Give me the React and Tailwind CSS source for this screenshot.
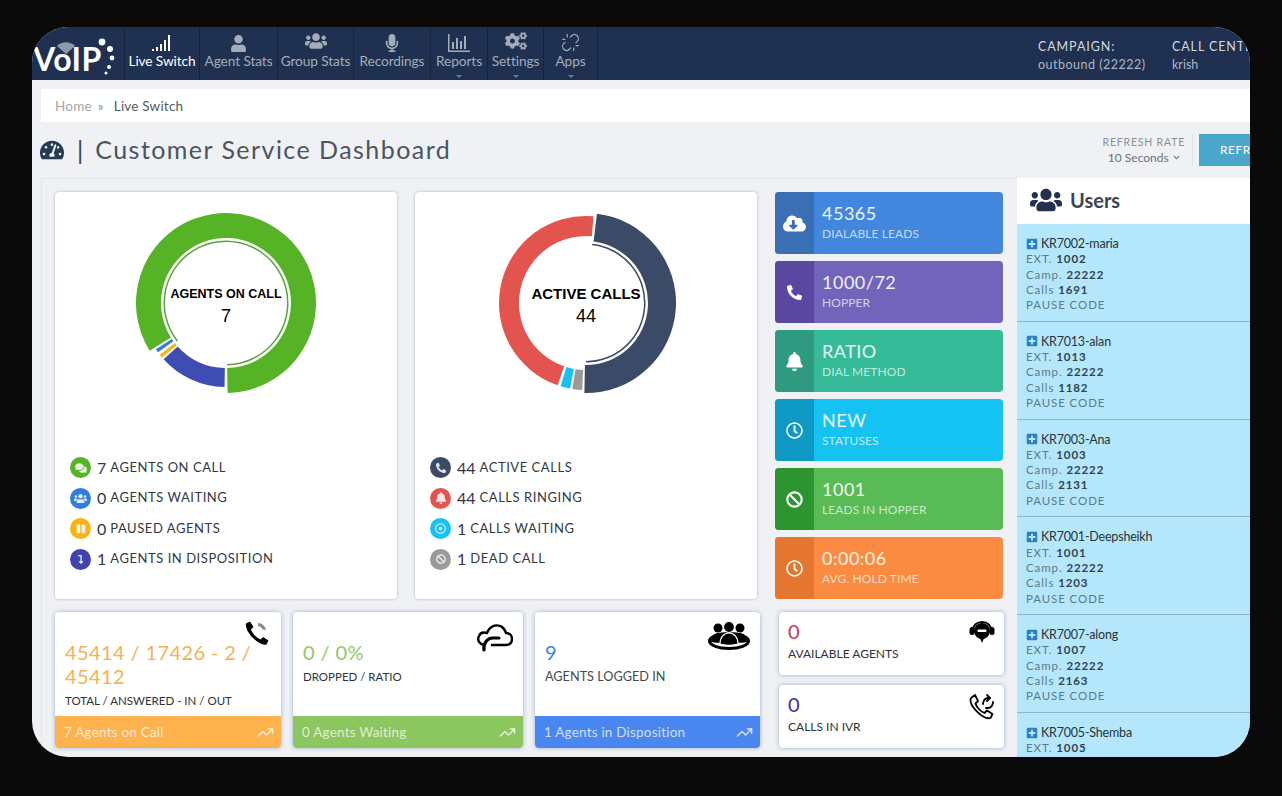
import React from 'react';
import {
  FaBan, FaBell, FaChevronDown, FaCloudDownloadAlt, FaCogs, FaComments, FaMicrophone, FaPause, FaPhone,
  FaPlusSquare, FaRegClock, FaRegDotCircle, FaTachometerAlt, FaUser, FaUsers, FaLevelDownAlt,
} from 'react-icons/fa';
import { TrendingUp, Unlink } from 'lucide-react';

const polar = (cx, cy, r, a) => {
  const t = ((a - 90) * Math.PI) / 180;
  return [cx + r * Math.cos(t), cy + r * Math.sin(t)];
};

// ring segment, angles in degrees clockwise from 12 o'clock
const arc = (cx, cy, r0, r1, a0, a1) => {
  const large = a1 - a0 > 180 ? 1 : 0;
  const [x1, y1] = polar(cx, cy, r1, a0);
  const [x2, y2] = polar(cx, cy, r1, a1);
  const [x3, y3] = polar(cx, cy, r0, a1);
  const [x4, y4] = polar(cx, cy, r0, a0);
  return `M${x1} ${y1}A${r1} ${r1} 0 ${large} 1 ${x2} ${y2}L${x3} ${y3}A${r0} ${r0} 0 ${large} 0 ${x4} ${y4}Z`;
};

const SignalIcon = () => (
  <svg width="22" height="18" viewBox="0 0 22 18" fill="currentColor">
    <rect x="1" y="15" width="2" height="2" />
    <rect x="5" y="13" width="2" height="4" />
    <rect x="9" y="10" width="2" height="7" />
    <rect x="13" y="6" width="2" height="11" />
    <rect x="17" y="1" width="2" height="16" />
  </svg>
);

const BarsIcon = () => (
  <svg width="22" height="18" viewBox="0 0 22 18" fill="currentColor">
    <rect x="0" y="0" width="1.5" height="18" />
    <rect x="0" y="16.5" width="22" height="1.5" />
    <rect x="4" y="8" width="2" height="7" />
    <rect x="8" y="4" width="2" height="11" />
    <rect x="12" y="7" width="2" height="8" />
    <rect x="16" y="2" width="2" height="13" />
  </svg>
);

const NAV = [
  { label: 'Live Switch', icon: <SignalIcon />, width: 'w-[75px]', active: true },
  { label: 'Agent Stats', icon: <FaUser size={17} />, width: 'w-[78px]' },
  { label: 'Group Stats', icon: <FaUsers size={22} />, width: 'w-[76px]' },
  { label: 'Recordings', icon: <FaMicrophone size={18} />, width: 'w-[77px]' },
  { label: 'Reports', icon: <BarsIcon />, width: 'w-[57px]', caret: true },
  { label: 'Settings', icon: <FaCogs size={22} />, width: 'w-[56px]', caret: true },
  { label: 'Apps', icon: <Unlink size={19} strokeWidth={1.5} />, width: 'w-[54px]', caret: true },
];

const TILES = [
  { value: '45365', label: 'DIALABLE LEADS', icon: <FaCloudDownloadAlt size={23} />, bg: 'bg-[#4287dd]', dark: 'bg-[#3a6fb5]' },
  { value: '1000/72', label: 'HOPPER', icon: <FaPhone size={15} className="-scale-x-100" />, bg: 'bg-[#7264bb]', dark: 'bg-[#5a479f]' },
  { value: 'RATIO', label: 'DIAL METHOD', icon: <FaBell size={19} />, bg: 'bg-[#35bb97]', dark: 'bg-[#2f9a7f]' },
  { value: 'NEW', label: 'STATUSES', icon: <FaRegClock size={17} />, bg: 'bg-[#15c3f3]', dark: 'bg-[#0e98c4]' },
  { value: '1001', label: 'LEADS IN HOPPER', icon: <FaBan size={17} />, bg: 'bg-[#58bb56]', dark: 'bg-[#2d9530]' },
  { value: '0:00:06', label: 'AVG. HOLD TIME', icon: <FaRegClock size={17} />, bg: 'bg-[#fb8b40]', dark: 'bg-[#e5762f]' },
];

const USERS = [
  { name: 'KR7002-maria', ext: '1002', calls: '1691' },
  { name: 'KR7013-alan', ext: '1013', calls: '1182' },
  { name: 'KR7003-Ana', ext: '1003', calls: '2131' },
  { name: 'KR7001-Deepsheikh', ext: '1001', calls: '1203' },
  { name: 'KR7007-along', ext: '1007', calls: '2163' },
  { name: 'KR7005-Shemba', ext: '1005', calls: '1120' },
];

const AGENT_LEGEND = [
  { n: '7', label: 'AGENTS ON CALL', color: 'bg-[#55b325]', icon: <FaComments size={12} /> },
  { n: '0', label: 'AGENTS WAITING', color: 'bg-[#2f7de1]', icon: <FaUsers size={13} /> },
  { n: '0', label: 'PAUSED AGENTS', color: 'bg-[#f5b316]', icon: <FaPause size={10} /> },
  { n: '1', label: 'AGENTS IN DISPOSITION', color: 'bg-[#3f45ad]', icon: <FaLevelDownAlt size={9} /> },
];

const CALL_LEGEND = [
  { n: '44', label: 'ACTIVE CALLS', color: 'bg-[#3b4a66]', icon: <FaPhone size={10} className="-scale-x-100" /> },
  { n: '44', label: 'CALLS RINGING', color: 'bg-[#e4544f]', icon: <FaBell size={12} /> },
  { n: '1', label: 'CALLS WAITING', color: 'bg-[#18c1f0]', icon: <FaRegDotCircle size={11} /> },
  { n: '1', label: 'DEAD CALL', color: 'bg-[#9a9a9a]', icon: <FaBan size={10} /> },
];

const Logo = () => (
  <div className="relative w-[92px] h-full shrink-0 text-white">
    <svg className="absolute left-0 top-0" width="92" height="53" viewBox="0 0 92 53">
      <path d="M25 19C30 14 38 14 43 19L34 27Z" fill="#8f9aa8" />
      <g fill="#fff">
        <circle cx="70" cy="15" r="3.4" />
        <circle cx="78" cy="22" r="3" />
        <circle cx="80" cy="31" r="2.4" />
        <circle cx="77" cy="40" r="2" />
        <circle cx="74" cy="46" r="1.5" />
      </g>
    </svg>
    <span className="absolute left-[1px] top-[12px] text-[32px] leading-[40px] font-bold tracking-[0.5px]">VoIP</span>
  </div>
);

const TopBar = () => (
  <header className="h-[53px] shrink-0 bg-[#1f3050] flex overflow-hidden">
    <Logo />
    {NAV.map((item) => (
      <div
        key={item.label}
        className={`${item.width} relative shrink-0 flex flex-col items-center border-l border-[#15233b] pt-[5px] ${item.active ? 'text-white' : 'text-[#a3acb9]'}`}
      >
        <div className="h-[20px] flex items-end">{item.icon}</div>
        <span className="text-[13.700px] leading-[18px] whitespace-nowrap tracking-[-0.1px]">{item.label}</span>
        {item.caret && <span className="absolute bottom-[2px] w-0 h-0 border-x-[3px] border-x-transparent border-t-[3px] border-t-[#6f7b8d]" />}
      </div>
    ))}
    <div className="border-l border-[#15233b] flex-1 flex justify-start pl-[440px] pt-[11px] text-[#d5d9df] whitespace-nowrap">
      <div className="w-[134px]">
        <div className="text-[12.5px] leading-[17px] tracking-[0.9px]">CAMPAIGN:</div>
        <div className="text-[12.5px] leading-[19px] tracking-[0.5px] text-[#aeb5c0]">outbound (22222)</div>
      </div>
      <div>
        <div className="text-[12.5px] leading-[17px] tracking-[0.9px]">CALL CENTER:</div>
        <div className="text-[12.5px] leading-[19px] text-[#aeb5c0]">krish</div>
      </div>
    </div>
  </header>
);

const TitleRow = () => (
  <div className="h-[56px] shrink-0 flex items-center pl-[8px] overflow-hidden">
    <FaTachometerAlt size={24} className="text-[#263a54] shrink-0" />
    <span className="ml-[13px] text-[25px] leading-[30px] text-[#3a3f48] font-normal">|</span>
    <h1 className="ml-[12px] text-[25px] leading-[30px] -mt-[2px] font-normal tracking-[1.45px] text-[#4a5560] whitespace-nowrap">Customer Service Dashboard</h1>
    <div className="ml-auto flex items-center h-[32px] -mt-[1px]">
      <div className="text-center border-r border-[#e0e2e6] pr-[7px] h-full pt-[1px]">
        <div className="text-[10.5px] leading-[15px] tracking-[0.8px] text-[#8b9097]">REFRESH RATE</div>
        <div className="text-[12px] leading-[16px] text-[#6b7178] flex items-center justify-center gap-[4px]">
          10 Seconds <FaChevronDown size={7} />
        </div>
      </div>
      <div className="ml-[6px] w-[51px] h-full bg-[#4ba6cc] text-white text-[12px] tracking-[0.5px] pl-[21px] flex items-center overflow-hidden whitespace-nowrap">REFRESH</div>
    </div>
  </div>
);

const DonutCard = ({ title, value, legend, children, titleSize }) => (
  <div className="w-[342px] h-[407px] bg-white rounded-[4px] shadow-[0_0_3px_rgba(90,100,120,0.45)] flex flex-col items-center">
    <div className="relative mt-[18px] w-[200px] h-[200px]">
      <svg width="200" height="200" viewBox="0 0 200 200">{children}</svg>
      <div className="absolute inset-0 flex flex-col items-center justify-center text-black font-['Liberation_Sans',sans-serif] pb-[8px]">
        <div className={`${titleSize} leading-[20px] font-bold whitespace-nowrap`}>{title}</div>
        <div className="text-[18px] leading-[24px]">{value}</div>
      </div>
    </div>
    <div className="self-start mt-[47px] ml-[15px] flex flex-col gap-[9.5px]">
      {legend.map((row) => (
        <div key={row.label} className="h-[21px] flex items-center text-[#33383f]">
          <span className={`${row.color} w-[21px] h-[21px] rounded-full flex items-center justify-center text-white/85`}>{row.icon}</span>
          <span className="ml-[6px] text-[16px]">{row.n}</span>
          <span className="ml-[4px] text-[13px] tracking-[0.55px] whitespace-nowrap">{row.label}</span>
        </div>
      ))}
    </div>
  </div>
);

const Tile = ({ value, label, icon, bg, dark }) => (
  <div className={`${bg} h-[62px] rounded-[4px] flex overflow-hidden text-white`}>
    <div className={`${dark} w-[39px] shrink-0 flex items-center justify-center`}>{icon}</div>
    <div className="pl-[8px] pt-[9px]">
      <div className="text-[18px] leading-[24px] tracking-[0.5px] text-white/90">{value}</div>
      <div className="text-[12px] leading-[18px] text-white/70 tracking-[0.1px]">{label}</div>
    </div>
  </div>
);

const PhoneSignal = () => (
  <svg width="28" height="28" viewBox="0 0 28 28">
    <path d="M3 3.500 7 1.500 10.500 7 8 9.500C9 13 13.500 18 17.500 19.500L20 17l5.500 3.500-2 4C16 27 1 11 3 3.500Z" fill="#000" />
    <path d="M15 3c4 0 7 3 8 7l-3.500-.5c-.5-2-2-3-4.500-3.500Z" fill="#8a8a8a" />
  </svg>
);

const CloudArrow = () => (
  <svg width="38" height="32" viewBox="0 0 38 32" fill="none" stroke="#000" strokeWidth="2.4" strokeLinecap="round" strokeLinejoin="round">
    <path d="M9 25C4 24 2 20 4 16c1-3 4-4 8-3 2-6 8-9 13-7 3 1 5 4 6 7 4 0 6 3 6 6 0 4-3 6-7 6H17" />
    <path d="M9 30c-1-6 3-12 9-12h6" strokeWidth="3.200" />
  </svg>
);

const GroupRing = () => (
  <svg width="42" height="30" viewBox="0 0 42 30">
    <ellipse cx="21" cy="21" rx="19.500" ry="7.500" fill="none" stroke="#000" strokeWidth="3" />
    <g fill="#000">
      <circle cx="10" cy="8" r="4.500" />
      <path d="M3 22c0-5 3-9 7-9s7 4 7 9c-4 1-10 1-14 0Z" />
      <circle cx="32" cy="8" r="4.500" />
      <path d="M25 22c0-5 3-9 7-9s7 4 7 9c-4 1-10 1-14 0Z" />
    </g>
    <g fill="#000" stroke="#fff" strokeWidth="1.200">
      <circle cx="21" cy="7" r="5.500" />
      <path d="M12 24c0-7 4-11 9-11s9 4 9 11c-5 1.500-13 1.500-18 0Z" />
    </g>
  </svg>
);

const Headset = () => (
  <svg width="26" height="24" viewBox="0 0 26 24">
    <path d="M4 11C4 5 8 2 13 2s9 3 9 9" fill="none" stroke="#000" strokeWidth="2" />
    <rect x="0.500" y="7" width="5" height="8" rx="2.500" fill="#000" />
    <rect x="20.500" y="7" width="5" height="8" rx="2.500" fill="#000" />
    <circle cx="13" cy="11" r="8" fill="#000" />
    <rect x="8.500" y="9.500" width="9" height="2.400" rx="1" fill="#fff" />
    <path d="M11 18l2 5 2-5Z" fill="#000" />
  </svg>
);

const PhoneLoop = () => (
  <svg width="26" height="28" viewBox="0 0 26 28" fill="none" stroke="#000" strokeWidth="1.800" strokeLinecap="round" strokeLinejoin="round">
    <path d="M2 5 6 2l3 6-2.500 2.500c1 3.500 5 8 9 9.500l2.500-2.500 5.500 3.500-2 4C14 27-1 12 2 5Z" />
    <path d="M14 11c0-3 2-6 5-6h2" />
    <path d="M18 2l3 3-3 3" />
    <path d="M24 9c0 3-2 6-5 6h-2" />
  </svg>
);

const StatCard = ({ width, value, valueColor, label, icon, footer, footerBg, labelClass }) => (
  <div className={`${width} h-[136px] bg-white rounded-[4px] shadow-[0_0_4px_rgba(96,130,190,0.6)] relative flex flex-col overflow-hidden`}>
    <div className="absolute right-[10px] top-[8px]">{icon}</div>
    <div className="flex-1 pl-[10px] pr-[4px] pt-[28px]">
      <div className={`text-[20px] leading-[24px] tracking-[0.4px] ${valueColor}`}>{value}</div>
      <div className={`leading-[15px] mt-[5px] whitespace-nowrap ${labelClass}`}>{label}</div>
    </div>
    <div className={`${footerBg} h-[32px] shrink-0 flex items-center justify-between pl-[9px] pr-[7px] text-white/75 text-[13.5px] tracking-[0.2px]`}>
      {footer}
      <TrendingUp size={17} strokeWidth={2.2} />
    </div>
  </div>
);

const SmallCard = ({ value, valueColor, label, icon }) => (
  <div className="h-[63px] bg-white rounded-[4px] shadow-[0_0_4px_rgba(96,130,190,0.6)] relative pl-[9px] pt-[8px]">
    <div className="absolute right-[9px] top-[8px]">{icon}</div>
    <div className={`text-[20px] leading-[22px] ${valueColor}`}>{value}</div>
    <div className="text-[12px] leading-[15px] mt-[4px] text-[#2e3338] whitespace-nowrap">{label}</div>
  </div>
);

const UserRow = ({ name, ext, calls }) => (
  <div className="h-[97.800px] shrink-0 border-b border-[#8fb6c8] bg-[#b5e7fc] pl-[9px] pt-[12px] text-[11.5px] leading-[15.300px] tracking-[0.9px] text-[#5c7b89]">
    <div className="flex items-center gap-[3px] text-[12.500px] text-[#28343c] tracking-[-0.2px]">
      <FaPlusSquare size={12} className="text-[#2b7fc0]" />
      {name}
    </div>
    <div>EXT. <span className="font-bold text-[#2f444f]">{ext}</span></div>
    <div>Camp. <span className="font-bold text-[#2f444f]">22222</span></div>
    <div>Calls <span className="font-bold text-[#2f444f]">{calls}</span></div>
    <div>PAUSE CODE</div>
  </div>
);

export default function App() {
  return (
    <div className="w-[1282px] h-[796px] bg-[#0a0a0a] pl-[32px] pt-[27px] overflow-hidden font-['Lato',sans-serif]">
      <div className="w-[1218px] h-[730px] rounded-[36px] overflow-hidden bg-[#eff1f4] flex flex-col">
        <TopBar />
        <div className="pt-[9px] pl-[9px] shrink-0">
          <div className="h-[33px] bg-white flex items-center pl-[14px] pt-[1px] text-[13.500px] tracking-[0.2px]">
            <span className="text-[#a2a6ab]">Home</span>
            <span className="ml-[6px] mr-[10px] text-[#8e9298]">»</span>
            <span className="text-[#555b62]">Live Switch</span>
          </div>
        </div>
        <TitleRow />
        <div className="flex flex-1 min-h-0">
          <div className="w-[985px] shrink-0 pl-[9px]">
            <div className="h-full border-t border-l border-[#e3e5e9] pl-[13px] pt-[13px]">
              <div className="flex gap-[18px]">
                <DonutCard title="AGENTS ON CALL" titleSize="text-[12.500px]" value="7" legend={AGENT_LEGEND}>
                  <path d={arc(100, 93, 65, 90, 238, 539)} fill="#55b325" />
                  <path d={arc(100, 93, 65, 84, 181, 228)} fill="#3f4db3" />
                  <path d={arc(100, 93, 65, 84, 229.500, 232)} fill="#f5b316" />
                  <path d={arc(100, 93, 65, 84, 234, 236.500)} fill="#2f7de1" />
                  <path d={arc(100, 93, 61, 62.500, 232, 539)} fill="#55a63a" />
                </DonutCard>
                <DonutCard title="ACTIVE CALLS" titleSize="text-[15px]" value="44" legend={CALL_LEGEND}>
                  <path d={arc(100, 93, 62, 90, 7, 181)} fill="#3b4a66" />
                  <path d={arc(100, 93, 67, 87, 199, 365)} fill="#e4544f" />
                  <path d={arc(100, 93, 67, 87, 190.500, 197)} fill="#18c1f0" />
                  <path d={arc(100, 93, 67, 87, 182.500, 189)} fill="#9a9a9a" />
                  <path d={arc(100, 93, 58, 59.500, 6, 180)} fill="#3b4a66" />
                </DonutCard>
                <div className="w-[228px] h-[407px] flex flex-col justify-between">
                  {TILES.map((tile) => <Tile key={tile.label} {...tile} />)}
                </div>
              </div>
              <div className="flex mt-[13px]">
                <StatCard width="w-[226px]" value="45414 / 17426 - 2 / 45412" valueColor="text-[#f5b251]" label="TOTAL / ANSWERED - IN / OUT" labelClass="text-[11.500px] text-[#2e3338]" icon={<PhoneSignal />} footer="7 Agents on Call" footerBg="bg-[#fdb24d]" />
                <StatCard width="w-[230px] ml-[12px]" value="0 / 0%" valueColor="text-[#8fc96b]" label="DROPPED / RATIO" labelClass="text-[11.500px] text-[#2e3338]" icon={<CloudArrow />} footer="0 Agents Waiting" footerBg="bg-[#8cc65e]" />
                <StatCard width="w-[225px] ml-[12px]" value="9" valueColor="text-[#3e82e0]" label="AGENTS LOGGED IN" labelClass="text-[12.700px] text-[#444a50]" icon={<GroupRing />} footer="1 Agents in Disposition" footerBg="bg-[#4a86ef]" />
                <div className="w-[225px] ml-[19px] flex flex-col gap-[10px]">
                  <SmallCard value="0" valueColor="text-[#c8385c]" label="AVAILABLE AGENTS" icon={<Headset />} />
                  <SmallCard value="0" valueColor="text-[#3a2ea8]" label="CALLS IN IVR" icon={<PhoneLoop />} />
                </div>
              </div>
            </div>
          </div>
          <aside className="flex-1 min-w-0 flex flex-col overflow-hidden">
            <div className="h-[46px] shrink-0 bg-white flex items-center pl-[13px] pb-[3px] gap-[8px] text-[#2d3d57]">
              <FaUsers size={32} className="text-[#22314d]" />
              <span className="text-[20px] font-bold text-[#3f464e]">Users</span>
            </div>
            {USERS.map((user) => <UserRow key={user.name} {...user} />)}
          </aside>
        </div>
      </div>
    </div>
  );
}
